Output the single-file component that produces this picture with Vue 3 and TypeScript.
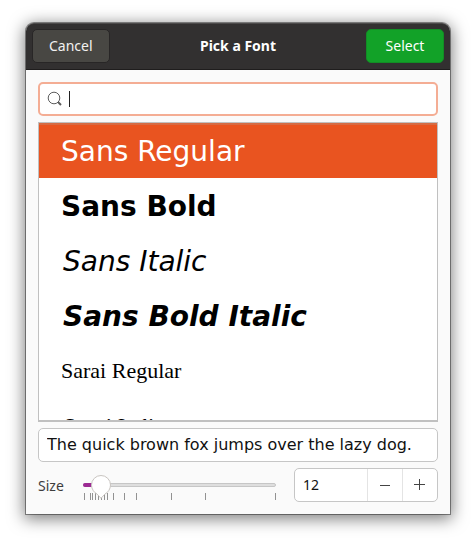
<script setup lang="ts">
import { computed, ref } from 'vue'

interface FontFace {
  name: string
  family: 'sans' | 'serif'
  bold?: boolean
  italic?: boolean
}

const MIN = 6
const MAX = 72

const faces: FontFace[] = [
  { name: 'Sans Regular', family: 'sans' },
  { name: 'Sans Bold', family: 'sans', bold: true },
  { name: 'Sans Italic', family: 'sans', italic: true },
  { name: 'Sans Bold Italic', family: 'sans', bold: true, italic: true },
  { name: 'Sarai Regular', family: 'serif' },
  { name: 'Sarai Italic', family: 'serif', italic: true },
]
const marks = [6, 8, 9, 10, 11, 12, 13, 14, 16, 20, 24, 36, 48, 72]

const query = ref('')
const selected = ref('Sans Regular')
const preview = ref('The quick brown fox jumps over the lazy dog.')
const size = ref(12)

const visible = computed(() =>
  faces.filter((f) => f.name.toLowerCase().includes(query.value.toLowerCase())),
)

function percent(value: number): string {
  const v = Math.min(MAX, Math.max(MIN, value))
  return `${((v - MIN) / (MAX - MIN)) * 100}%`
}

function step(delta: number) {
  size.value = Math.min(MAX, Math.max(MIN, size.value + delta))
}
</script>

<template>
  <main class="desktop">
    <section class="dialog" role="dialog" aria-labelledby="title">
      <header class="titlebar">
        <button class="action cancel" type="button">Cancel</button>
        <h1 id="title">Pick a Font</h1>
        <button class="action select" type="button">Select</button>
      </header>

      <div class="content">
        <label class="field search">
          <svg class="lens" viewBox="0 0 16 16" aria-hidden="true">
            <circle cx="7" cy="7" r="5.8" />
            <path d="M11 11 L14 14" />
          </svg>
          <span v-if="!query" class="caret"></span>
          <input v-model="query" type="text" aria-label="Search fonts" />
        </label>

        <ul class="faces" role="listbox" aria-label="Fonts">
          <li
            v-for="face in visible"
            :key="face.name"
            class="face"
            :class="[face.family, { bold: face.bold, italic: face.italic, active: face.name === selected }]"
            role="option"
            :aria-selected="face.name === selected"
            @click="selected = face.name"
          >
            {{ face.name }}
          </li>
        </ul>

        <input v-model="preview" class="field preview" type="text" aria-label="Preview text" />

        <div class="size-row">
          <label for="size-scale">Size</label>
          <div class="scale">
            <div class="track"><div class="fill" :style="{ width: percent(size) }"></div></div>
            <div class="rail">
              <span v-for="m in marks" :key="m" class="mark" :style="{ left: percent(m) }"></span>
              <svg class="knob" :style="{ left: percent(size) }" viewBox="0 0 22 26" aria-hidden="true">
                <path d="M11 24.3 L7 20 C4 18.5 1.5 15 1.5 11 A9.5 9.5 0 0 1 20.5 11 C20.5 15 18 18.5 15 20 Z" />
              </svg>
            </div>
            <input id="size-scale" v-model.number="size" type="range" :min="MIN" :max="MAX" />
          </div>
          <div class="field spin">
            <input v-model.number="size" type="text" inputmode="numeric" aria-label="Font size" />
            <button type="button" aria-label="Decrease" @click="step(-1)">
              <svg viewBox="0 0 16 16" aria-hidden="true"><path d="M3 8.5 H13" /></svg>
            </button>
            <button type="button" aria-label="Increase" @click="step(1)">
              <svg viewBox="0 0 16 16" aria-hidden="true"><path d="M2 7.5 H13 M7.5 2 V13" /></svg>
            </button>
          </div>
        </div>
      </div>
    </section>
  </main>
</template>

<style>
body {
  background: #fff;
}
</style>

<style scoped>
* {
  box-sizing: border-box;
}

.desktop {
  padding: 23px 26px 29px;
  overflow: hidden;
  font: 14px/20px "Noto Sans", "Open Sans", sans-serif;
  color: #3d3d3d;
}

.dialog {
  background: #fafafa;
  border-radius: 8px 8px 0 0;
  box-shadow:
    0 0 0 1px rgba(0, 0, 0, 0.4),
    0 3px 16px 2px rgba(0, 0, 0, 0.5);
}

.titlebar {
  display: grid;
  grid-template-columns: 1fr auto 1fr;
  align-items: center;
  height: 47px;
  padding: 0 6px 2px;
  background: #323030;
  border-top: 1px solid #4c4a4a;
  border-bottom: 1px solid #1f1d1d;
  border-radius: 8px 8px 0 0;
}

h1 {
  margin: 0;
  font-size: 14px;
  font-weight: 700;
  color: #fff;
}

button,
input {
  font: inherit;
  color: inherit;
}

.action {
  height: 34px;
  padding: 0 16px;
  color: #f2f1f0;
  border: 1px solid #282626;
  border-radius: 5px;
}

.cancel {
  justify-self: start;
  background: #484743;
}

.select {
  justify-self: end;
  min-width: 78px;
  color: #fff;
  background: #12a228;
  border-color: #128e25;
}

.content {
  display: flex;
  flex-direction: column;
  gap: 6px;
  padding: 12px;
}

.field {
  height: 34px;
  background: #fff;
  border: 1px solid #c6c6c6;
  border-radius: 5px;
  outline: none;
}

.search {
  display: flex;
  align-items: center;
  padding: 0 7px;
  border: 2px solid #f4ad94;
}

.search input,
.spin input {
  flex: 1;
  min-width: 0;
  padding: 0;
  background: none;
  border: 0;
  outline: none;
}

.lens {
  width: 16px;
  height: 16px;
  margin-right: 6px;
  fill: none;
  stroke: #5c5c5c;
}

.lens path {
  stroke-width: 2;
}

.caret {
  width: 1px;
  height: 16px;
  background: #222;
}

.search input {
  caret-color: transparent;
}

.faces {
  height: 300px;
  margin: 0;
  padding: 0;
  overflow: hidden;
  list-style: none;
  color: #000;
  background: #fff;
  border: 1px solid #c0c0c0;
  border-bottom-width: 2px;
}

.face {
  height: 55px;
  padding-left: 22px;
  line-height: 55px;
  white-space: nowrap;
}

.sans {
  font-family: "DejaVu Sans", sans-serif;
  font-size: 28px;
  line-height: 57px;
}

.serif {
  font-family: "Liberation Serif", serif;
  font-size: 22px;
}

.bold {
  font-weight: 700;
}

.italic {
  padding-left: 24px;
  font-style: italic;
}

.active {
  color: #fff;
  background: #e95420;
  box-shadow: inset 0 2px 0 #d76b43;
}

.preview {
  width: 100%;
  padding: 0 8px 2px;
  font-family: "DejaVu Sans", sans-serif;
  font-size: 16px;
  color: #111;
}

.size-row {
  display: flex;
  align-items: center;
}

.size-row > label {
  padding-top: 2px;
}

.scale {
  position: relative;
  flex: 1;
  height: 34px;
  margin: 0 18px 0 19px;
  padding-top: 15px;
}

.track {
  height: 4px;
  background: #dedede;
  border: 1px solid #c6c6c6;
  border-radius: 2px;
}

.fill {
  height: 4px;
  margin: -1px;
  background: #9c2a93;
  border-radius: 2px;
}

.rail {
  position: absolute;
  top: 0;
  left: 1px;
  right: 1px;
  height: 100%;
}

.mark {
  position: absolute;
  top: 25px;
  width: 1px;
  height: 7px;
  background: #929292;
}

.knob {
  position: absolute;
  top: 6px;
  width: 22px;
  height: 26px;
  margin-left: -11px;
  fill: #fff;
  stroke: #c9c5c1;
}

.scale input {
  position: absolute;
  inset: 0;
  width: 100%;
  margin: 0;
  opacity: 0;
}

.spin {
  display: flex;
  width: 144px;
  color: #111;
}

.spin input {
  padding-left: 8px;
}

.spin button {
  display: grid;
  place-items: center;
  width: 35px;
  padding: 0;
  background: none;
  border: 0;
  border-left: 1px solid #e4e4e4;
}

.spin svg {
  width: 16px;
  height: 16px;
  fill: none;
  stroke: #444;
}
</style>
